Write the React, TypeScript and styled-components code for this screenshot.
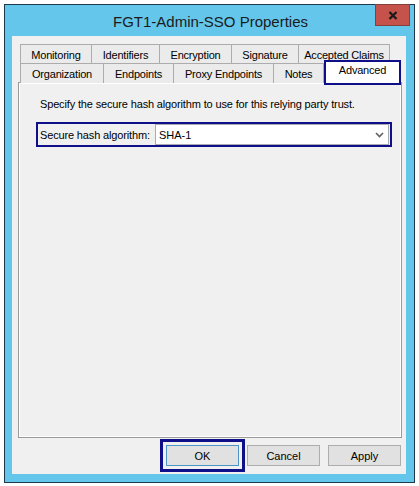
import React from 'react';
import styled, { createGlobalStyle } from 'styled-components';

const GlobalStyle = createGlobalStyle`
  html, body {
    margin: 0;
    padding: 0;
    background: #ffffff;
  }
  body {
    font-family: "Liberation Sans", Arial, sans-serif;
    font-size: 11px;
    color: #000;
  }
`;

const FRAME = '#64c6ea';
const MARK = '#0f0f8a';

type TabDef = { label: string; width: number; selected?: boolean };

const topRow: TabDef[] = [
  { label: 'Monitoring', width: 72 },
  { label: 'Identifiers', width: 69 },
  { label: 'Encryption', width: 73 },
  { label: 'Signature', width: 68 },
  { label: 'Accepted Claims', width: 92 },
];

const bottomRow: TabDef[] = [
  { label: 'Organization', width: 84 },
  { label: 'Endpoints', width: 71 },
  { label: 'Proxy Endpoints', width: 101 },
  { label: 'Notes', width: 51 },
  { label: 'Advanced', width: 77, selected: true },
];

const App = () => {
  return (
    <>
      <GlobalStyle />
      <Window>
        <TitleBar>
          <Title>FGT1-Admin-SSO Properties</Title>
          <CloseButton>
            <svg width="10" height="9" viewBox="0 0 10 9">
              <path d="M1.5 1 L8.5 8 M8.5 1 L1.5 8" stroke="#1a1a1a" strokeWidth="2.3" />
            </svg>
          </CloseButton>
        </TitleBar>
        <Client>
          <TabStrip>
            <TabRow>
              {topRow.map((t) => (
                <Tab key={t.label} $width={t.width}>{t.label}</Tab>
              ))}
            </TabRow>
            <TabRow>
              {bottomRow.map((t) => (
                <Tab key={t.label} $width={t.width} $selected={t.selected}>{t.label}</Tab>
              ))}
            </TabRow>
          </TabStrip>
          <Panel>
            <Hint>Specify the secure hash algorithm to use for this relying party trust.</Hint>
            <FieldRow>
              <FieldLabel>Secure hash algorithm:</FieldLabel>
              <Combo>
                <span>SHA-1</span>
                <svg width="9" height="6" viewBox="0 0 9 6">
                  <path d="M1 1 L4.5 4.5 L8 1" fill="none" stroke="#606060" strokeWidth="1.6" />
                </svg>
              </Combo>
            </FieldRow>
          </Panel>
          <ButtonBar>
            <DialogButton $default>OK</DialogButton>
            <DialogButton>Cancel</DialogButton>
            <DialogButton>Apply</DialogButton>
          </ButtonBar>
        </Client>
      </Window>
    </>
  );
};

export default App;

const Window = styled.div`
  margin: 4px 0 0 4px;
  width: 411px;
  box-sizing: border-box;
  border: 1px solid #1f3a4d;
  background: ${FRAME};
  padding: 0 8px 8px 7px;
`;

const TitleBar = styled.div`
  display: flex;
  align-items: flex-start;
  height: 31px;
  margin: 0 -4px 0 0;
`;

const Title = styled.div`
  flex: 1;
  padding-left: 34px;
  text-align: center;
  line-height: 33px;
  font-size: 15px;
  color: #1b1b1b;
`;

const CloseButton = styled.div`
  width: 33px;
  height: 20px;
  margin-top: -1px;
  background: #c5534b;
  border: 1px solid #85403b;
  display: flex;
  align-items: center;
  justify-content: center;
`;

const Client = styled.div`
  background: #f0f0f0;
  height: 438px;
  box-sizing: border-box;
  padding: 8px 4px 8px 6px;
  display: flex;
  flex-direction: column;
`;

const TabStrip = styled.div`
  padding-left: 3px;
  display: flex;
  flex-direction: column;
`;

const TabRow = styled.div`
  display: flex;
  align-items: flex-start;
  height: 19px;
`;

const Tab = styled.div<{ $width: number; $selected?: boolean }>`
  box-sizing: border-box;
  width: ${(p) => p.$width}px;
  height: ${(p) => (p.$selected ? 25 : 20)}px;
  margin-left: ${(p) => (p.$selected ? 0 : -1)}px;
  margin-top: ${(p) => (p.$selected ? -3 : 0)}px;
  background: ${(p) => (p.$selected ? '#ffffff' : '#ebebeb')};
  border: 1px solid #acacac;
  border-bottom: none;
  ${(p) => p.$selected && `border: 2px solid ${MARK}; padding-bottom: 5px;`}
  position: relative;
  z-index: ${(p) => (p.$selected ? 2 : 0)};
  display: flex;
  align-items: center;
  justify-content: center;
  letter-spacing: -0.2px;
  white-space: nowrap;
`;

const Panel = styled.div`
  height: 356px;
  box-sizing: border-box;
  border: 1px solid #9a9a9a;
  box-shadow: inset 0 0 0 1px #ffffff;
  padding: 15px 9px 0 17px;
`;

const Hint = styled.div`
  padding-left: 4px;
  line-height: 13px;
  letter-spacing: -0.15px;
  white-space: nowrap;
`;

const FieldRow = styled.div`
  margin-top: 11px;
  border: 2px solid ${MARK};
  padding: 0 1px 0 2px;
  height: 21px;
  display: flex;
  align-items: center;
`;

const FieldLabel = styled.div`
  width: 115px;
  letter-spacing: -0.15px;
  white-space: nowrap;
`;

const Combo = styled.div`
  flex: 1;
  height: 21px;
  box-sizing: border-box;
  background: #ffffff;
  border: 1px solid #a9abb1;
  padding: 0 4px 0 3px;
  display: flex;
  align-items: center;
  justify-content: space-between;
`;

const ButtonBar = styled.div`
  margin-top: 7px;
  display: flex;
  justify-content: flex-end;
  gap: 8px;
  padding-right: 1px;
`;

const DialogButton = styled.div<{ $default?: boolean }>`
  width: 73px;
  height: 21px;
  box-sizing: border-box;
  background: #e1e1e1;
  border: 1px solid ${(p) => (p.$default ? '#4d95c9' : '#adadad')};
  display: flex;
  align-items: center;
  justify-content: center;
  ${(p) => p.$default && `outline: 3px solid ${MARK}; outline-offset: 3px;`}
`;
